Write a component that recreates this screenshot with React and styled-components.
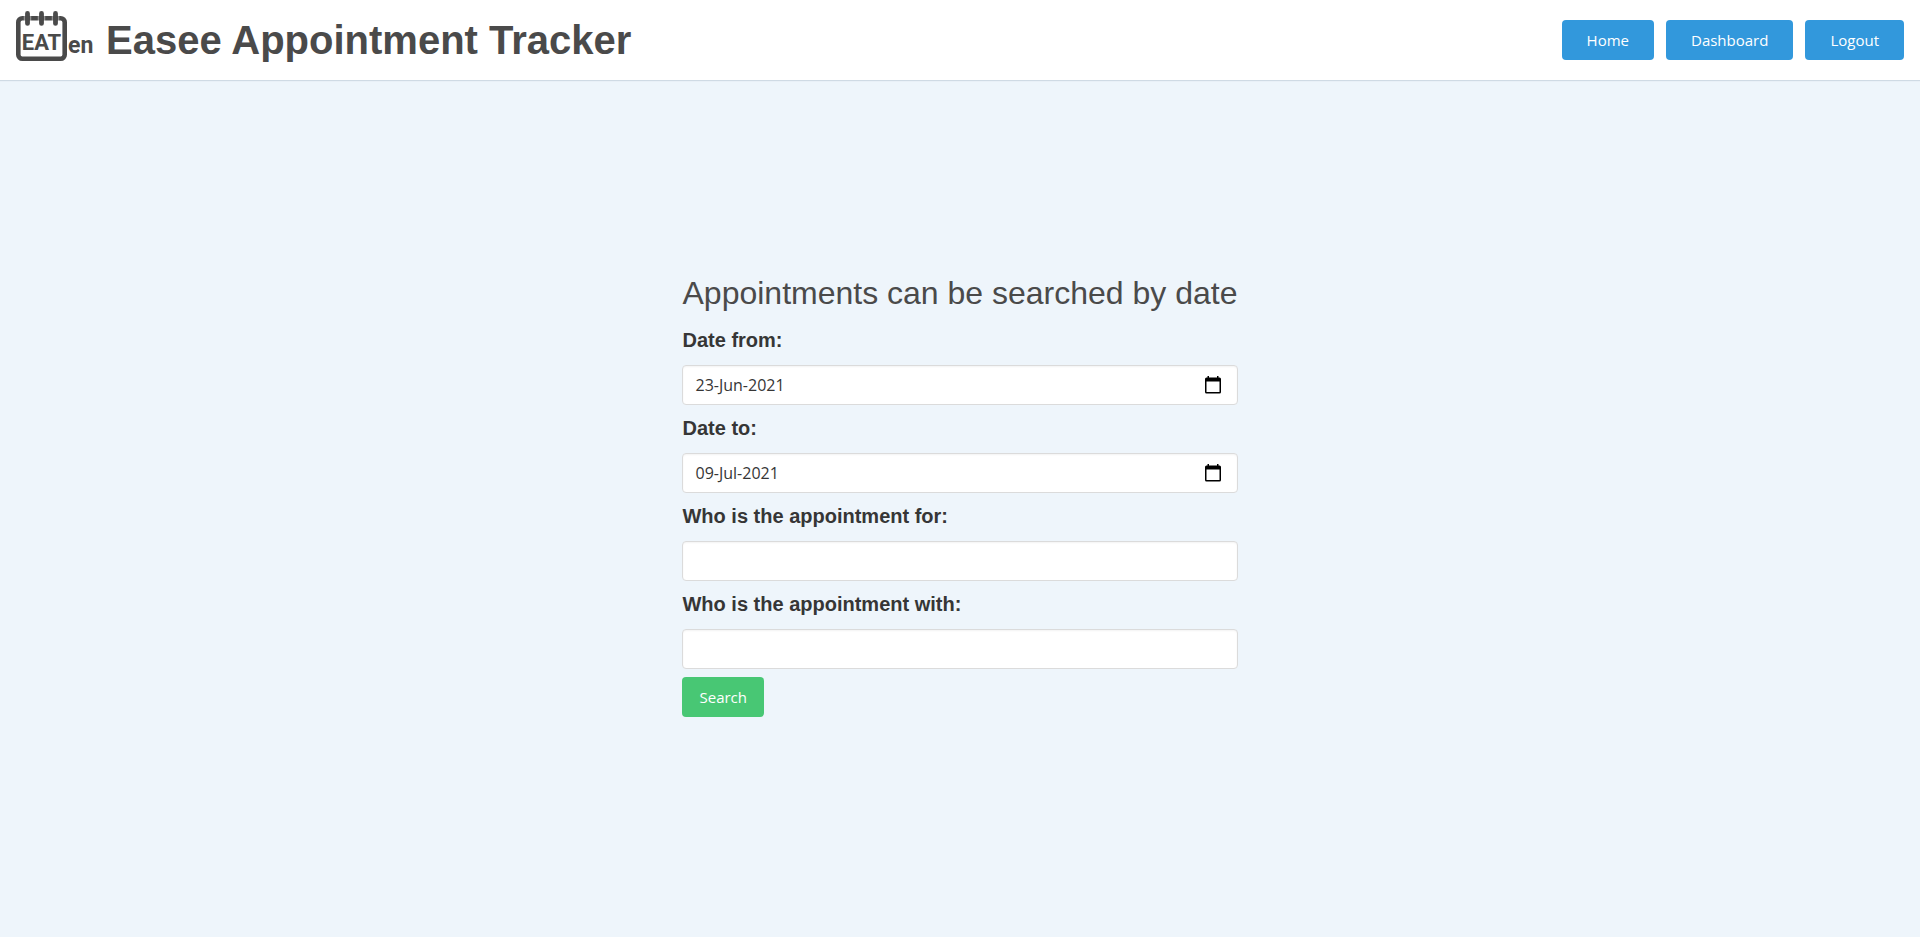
import React, { useState } from "react";
import styled, { createGlobalStyle } from "styled-components";

const GlobalStyle = createGlobalStyle`
  *, *::before, *::after { box-sizing: border-box; }
  body {
    margin: 0;
    background: #eef5fb;
    font-family: "Liberation Sans", Arial, sans-serif;
  }
`;

const uiFont = `"Segoe UI", "Open Sans", "Noto Sans", sans-serif`;

const Page = styled.div`
  display: flex;
  flex-direction: column;
  min-height: 100vh;
`;

const Header = styled.header`
  display: flex;
  align-items: center;
  justify-content: space-between;
  min-height: 80px;
  padding: 0 16px;
  background: #fff;
  box-shadow: 0 1px 1px #cfdae4;
`;

const Brand = styled.a`
  display: flex;
  align-items: center;
  gap: 10px;
  color: #4a4a4a;
  text-decoration: none;
`;

const Logo = styled.svg`
  flex: none;
  display: block;
`;

const BrandName = styled.h1`
  margin: 0;
  font-size: 40px;
  line-height: 48px;
  font-weight: 700;
`;

const Nav = styled.nav`
  display: flex;
  gap: 12px;
`;

const Button = styled.button`
  height: 40px;
  padding: 0 ${(p) => p.$pad}px;
  border: 0;
  border-radius: 4px;
  background: ${(p) => p.$color};
  color: #fff;
  font-family: ${uiFont};
  font-size: 15px;
  line-height: 24px;
  cursor: pointer;
`;

const Main = styled.main`
  flex: 1;
  display: flex;
  align-items: center;
  justify-content: center;
  padding: 24px 24px 50px;
`;

const Form = styled.form`
  display: flex;
  flex-direction: column;
  gap: 8px;
`;

const Heading = styled.h2`
  margin: 0;
  padding-bottom: 6px;
  color: #4a4a4a;
  font-size: 32px;
  line-height: 36px;
  font-weight: 400;
`;

const Field = styled.div`
  display: flex;
  flex-direction: column;
`;

const Label = styled.label`
  color: #363636;
  font-size: 20px;
  line-height: 24px;
  font-weight: 700;
  padding: 3px 0 13px;
`;

const Control = styled.div`
  display: flex;
  align-items: center;
  height: 40px;
  padding: 0 16px 0 12px;
  border: 1px solid #dbdbdb;
  border-radius: 4px;
  background: #fff;
  box-shadow: inset 0 1px 2px rgba(10, 10, 10, 0.05);
  &:focus-within { border-color: #3298dc; }
`;

const Input = styled.input`
  flex: 1;
  min-width: 0;
  height: 24px;
  padding: 0;
  border: 0;
  outline: 0;
  background: transparent;
  color: #363636;
  font-family: ${uiFont};
  font-size: 16px;
`;

const PickerButton = styled.button`
  display: flex;
  padding: 0;
  border: 0;
  background: transparent;
  color: #000;
  cursor: pointer;
`;

const Actions = styled.div`
  display: flex;
`;

function BrandLogo() {
  return (
    <Logo width="80" height="60" viewBox="0 0 80 60" role="img" aria-label="EATen">
      <rect x="2.3" y="8.3" width="46.4" height="40.4" rx="4" fill="none" stroke="#4a4a4a" strokeWidth="4.6" />
      <path d="M8.3 6V11M14.7 6V11M22.3 6V11M28.7 6V11M36.3 6V11M42.7 6V11" stroke="#fff" strokeOpacity="0.5" strokeWidth="1" />
      <path d="M11.5 3.4V13.4M25.5 3.4V13.4M39.5 3.4V13.4" stroke="#4a4a4a" strokeWidth="4.8" strokeLinecap="round" />
      <g fill="#4a4a4a" fontFamily="Roboto, 'Liberation Sans', sans-serif" fontWeight="700">
        <text x="25.5" y="40" fontSize="22" textAnchor="middle">EAT</text>
        <text x="52" y="43" fontSize="23">en</text>
      </g>
    </Logo>
  );
}

function CalendarIcon() {
  return (
    <svg width="16" height="18" viewBox="0 0 16 18" aria-hidden="true">
      <path
        fill="currentColor"
        fillRule="evenodd"
        d="M2.5 0H4v1.5h8V0h1.5v1.5h1A1.5 1.5 0 0 1 16 3v13a1.5 1.5 0 0 1-1.5 1.5h-13A1.5 1.5 0 0 1 0 16V3a1.5 1.5 0 0 1 1.5-1.5h1zM1.5 5.5V16h13V5.5z"
      />
    </svg>
  );
}

const fields = [
  { id: "from", label: "Date from:", value: "23-Jun-2021", date: true },
  { id: "to", label: "Date to:", value: "09-Jul-2021", date: true },
  { id: "for", label: "Who is the appointment for:", value: "" },
  { id: "with", label: "Who is the appointment with:", value: "" },
];

function SearchField({ id, label, value, date }) {
  const [text, setText] = useState(value);
  return (
    <Field>
      <Label htmlFor={id}>{label}</Label>
      <Control>
        <Input id={id} type="text" value={text} onChange={(e) => setText(e.target.value)} />
        {date && (
          <PickerButton type="button" aria-label="Open calendar">
            <CalendarIcon />
          </PickerButton>
        )}
      </Control>
    </Field>
  );
}

export default function App() {
  return (
    <Page>
      <GlobalStyle />
      <Header>
        <Brand href="#">
          <BrandLogo />
          <BrandName>Easee Appointment Tracker</BrandName>
        </Brand>
        <Nav>
          {["Home", "Dashboard", "Logout"].map((name) => (
            <Button key={name} type="button" $color="#3298dc" $pad={25}>{name}</Button>
          ))}
        </Nav>
      </Header>
      <Main>
        <Form onSubmit={(e) => e.preventDefault()}>
          <Heading>Appointments can be searched by date</Heading>
          {fields.map((f) => <SearchField key={f.id} {...f} />)}
          <Actions>
            <Button type="submit" $color="#48c774" $pad={17}>Search</Button>
          </Actions>
        </Form>
      </Main>
    </Page>
  );
}
